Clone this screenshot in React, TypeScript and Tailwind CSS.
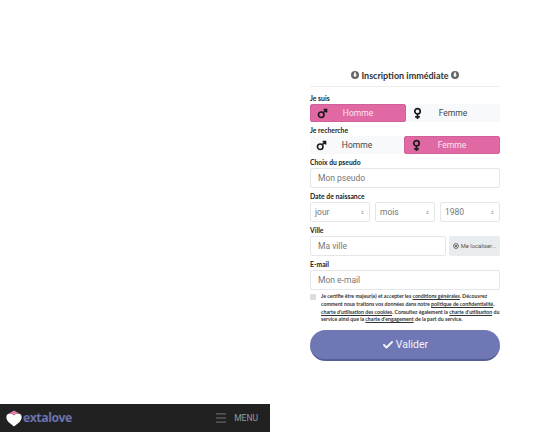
import { Check, ChevronDown, Menu } from 'lucide-react'

const roboto = "font-['Roboto',sans-serif]"
const labelCls = "block h-[14px] text-[6.8px] leading-[16px] font-bold text-[#222] font-['Lato',sans-serif]"
const fieldCls = `flex items-center bg-white border border-[#e4e6e8] rounded-[2px] text-[8.5px] text-[#777] ${roboto}`

function MaleIcon() {
  return (
    <svg width="11" height="11" viewBox="0 0 12 12" fill="none" stroke="#1c1c1c" strokeWidth="1.8">
      <circle cx="4.6" cy="7.4" r="3" />
      <path d="M6.8 5.2 10.200 1.800M7.200 1.600h3.200v3.200" />
    </svg>
  )
}

function FemaleIcon() {
  return (
    <svg width="9" height="13" viewBox="0 0 10 13" fill="none" stroke="#1c1c1c" strokeWidth="1.9">
      <circle cx="5" cy="4" r="3" />
      <path d="M5 7v5.500M2.400 10.200h5.200" />
    </svg>
  )
}

function ArrowDot() {
  return (
    <svg width="8" height="8" viewBox="0 0 8 8" className="mb-[3px]">
      <circle cx="4" cy="4" r="4" fill="#666" />
      <path d="M2 3.800h4L4 6.300z M3.100 1.600h1.800v2.400H3.100z" fill="#fff" />
    </svg>
  )
}

function Choice({ icon, text, active }: { icon: React.ReactNode; text: string; active?: boolean }) {
  return (
    <div
      className={`flex-1 h-[18px] flex items-center rounded-[2px] text-[8.5px] ${roboto} ${
        active ? 'bg-[#e069a3] border border-[#d0609a] text-[#fbe6f0]' : 'bg-[#f8f9fa] text-[#444]'
      }`}
    >
      <span className="w-[22px] flex justify-center shrink-0">{icon}</span>
      <span className="flex-1 text-center pr-[22px]">{text}</span>
    </div>
  )
}

function Sel({ text, className }: { text: string; className: string }) {
  return (
    <div className={`${fieldCls} h-[20px] pl-[4px] pr-[5px] justify-between text-[#555] ${className}`}>
      <span>{text}</span>
      <span className="flex flex-col -space-y-[1px]">
        <ChevronDown size={3} strokeWidth={5} color="#555" className="rotate-180" />
        <ChevronDown size={3} strokeWidth={5} color="#555" />
      </span>
    </div>
  )
}

function Legal({ children }: { children: React.ReactNode }) {
  return <span className="underline">{children}</span>
}

export default function App() {
  return (
    <div className="w-[540px] h-[432px] flex bg-white overflow-hidden">
      <div className="w-[270px] flex flex-col justify-end">
        <div className="h-[28px] bg-[#212121] flex items-center pl-[6px] pr-[12px]">
          <svg width="16" height="17" viewBox="0 0 16 17" className="shrink-0">
            <path d="M1.500 4.200C4 3 6.500 3.600 8 5.400 9.500 3.600 12 3 14.500 4.200 16.400 6 15.800 9.600 13.600 12L8 16.600 2.400 12C.2 9.600-.4 6 1.500 4.200z" fill="#fff" />
            <path d="M1.500 4.200C4 3 6.500 3.600 8 5.400 9.500 3.600 12 3 14.500 4.200L8 .5z" fill="#e07fb0" />
          </svg>
          <span className="ml-[1px] text-[12.3px] font-bold text-[#6a72ad] tracking-[-0.5px] font-['Open_Sans',sans-serif]">extalove</span>
          <Menu size={14} strokeWidth={1.2} color="#9a9a9a" className="ml-auto" />
          <span className={`ml-[6px] text-[8.5px] text-[#9a9a9a] ${roboto}`}>MENU</span>
        </div>
      </div>

      <div className="w-[190px] ml-[40px] pt-[66px]">
        <div className="h-[21px] border-b border-[#eeeeee] flex justify-center items-center gap-[2px] text-[9px] font-bold text-[#333] font-['Lato',sans-serif]">
          <ArrowDot />
          <span>Inscription immédiate</span>
          <ArrowDot />
        </div>

        <label className={`${labelCls} mt-[3px]`}>Je suis</label>
        <div className="flex">
          <Choice icon={<MaleIcon />} text="Homme" active />
          <Choice icon={<FemaleIcon />} text="Femme" />
        </div>

        <label className={labelCls}>Je recherche</label>
        <div className="flex">
          <Choice icon={<MaleIcon />} text="Homme" />
          <Choice icon={<FemaleIcon />} text="Femme" active />
        </div>

        <label className={labelCls}>Choix du pseudo</label>
        <div className={`${fieldCls} h-[20px] pl-[7px]`}>Mon pseudo</div>

        <label className={labelCls}>Date de naissance</label>
        <div className="flex gap-[5px]">
          <Sel text="jour" className="w-[60px]" />
          <Sel text="mois" className="w-[60px]" />
          <Sel text="1980" className="w-[60px]" />
        </div>

        <label className={labelCls}>Ville</label>
        <div className="flex gap-[3px]">
          <div className={`${fieldCls} h-[20px] pl-[7px] w-[136px]`}>Ma ville</div>
          <div className={`flex-1 h-[20px] bg-[#e9ecef] rounded-[2px] flex items-center justify-center gap-[2px] text-[5.8px] text-[#555] ${roboto}`}>
            <svg width="6" height="6" viewBox="0 0 6 6">
              <circle cx="3" cy="3" r="2.400" fill="none" stroke="#555" strokeWidth="0.9" />
              <circle cx="3" cy="3" r="1.100" fill="#555" />
            </svg>
            Me localiser...
          </div>
        </div>

        <label className={labelCls}>E-mail</label>
        <div className={`${fieldCls} h-[20px] pl-[7px]`}>Mon e-mail</div>

        <div className="flex mt-[3px]">
          <span className="w-[6px] h-[6px] mt-[1px] rounded-[1px] bg-[#dcdde3] shrink-0" />
          <p className="ml-[5px] text-[5.2px] leading-[7.75px] font-bold text-[#333] font-['Lato',sans-serif] w-[181px]">
            Je certifie être majeur(e) et accepter les <Legal>conditions générales</Legal>. Découvrez comment nous traitons vos données dans notre <Legal>politique de confidentialité</Legal>, <Legal>charte d'utilisation des cookies</Legal>. Consultez également la <Legal>charte d'utilisation</Legal> du service ainsi que la <Legal>charte d'engagement</Legal> de la part du service.
          </p>
        </div>

        <div className={`mt-[6px] h-[31px] rounded-full bg-[#6f78b4] border-b-2 border-[#565e96] flex items-center justify-center gap-[2px] text-[10.5px] text-[#f2f3fb] ${roboto}`}>
          <Check size={12} strokeWidth={4} />
          Valider
        </div>
      </div>
    </div>
  )
}
